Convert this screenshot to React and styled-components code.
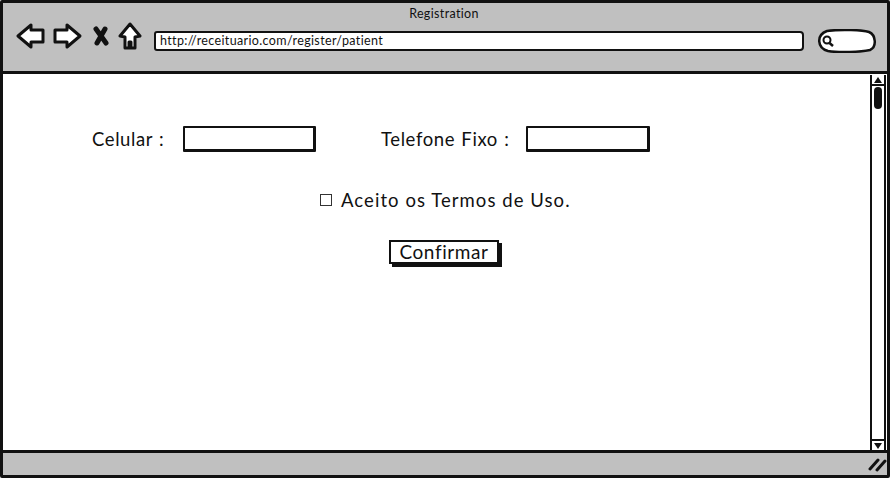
import styled, { createGlobalStyle } from "styled-components";

const Global = createGlobalStyle`
  html, body {
    margin: 0;
    padding: 0;
    background: #fff;
  }
  * {
    box-sizing: border-box;
  }
`;

const Page = styled.div`
  width: 890px;
  height: 480px;
  overflow: hidden;
  font-family: "Lato", "Liberation Sans", sans-serif;
  color: #111;
`;

const Browser = styled.div`
  width: 890px;
  height: 478px;
  display: flex;
  flex-direction: column;
  border: 3px solid #111;
  border-radius: 2px;
  background: #fff;
`;

const Header = styled.header`
  height: 71px;
  flex: none;
  background: #c0c0c0;
  border-bottom: 3px solid #111;
  padding: 3px 10px 0 13px;
`;

const Title = styled.div`
  height: 16px;
  line-height: 16px;
  text-align: center;
  font-size: 12.5px;
  letter-spacing: 0.35px;
  padding-right: 5px;
  margin-bottom: 2px;
`;

const Toolbar = styled.div`
  display: flex;
  align-items: center;
  height: 33px;
`;

const Address = styled.div`
  width: 650px;
  height: 20px;
  margin-left: 12px;
  padding-left: 4px;
  line-height: 16px;
  font-size: 12.5px;
  letter-spacing: 0.36px;
  background: #fff;
  border: 2px solid #111;
  border-radius: 3px 4px 4px 3px;
`;

const Search = styled.svg`
  margin-left: 13px;
  flex: none;
`;

const Main = styled.div`
  flex: 1;
  min-height: 0;
  display: flex;
`;

const Content = styled.main`
  flex: 1;
  display: flex;
  flex-direction: column;
  padding-top: 51px;
`;

const FieldRow = styled.div`
  display: flex;
  align-items: center;
  padding-left: 89px;
  height: 28px;
`;

const Label = styled.label`
  font-size: 18.5px;
  letter-spacing: 0.6px;
  word-spacing: 1px;
  white-space: nowrap;
  width: ${(p) => p.$width}px;
  margin-left: ${(p) => p.$offset || 0}px;
`;

const TextBox = styled.div`
  width: ${(p) => p.$width}px;
  height: 26px;
  background: #fff;
  border: 2px solid #111;
  border-right-width: 3px;
  border-bottom-width: 3px;
  border-radius: 1px;
`;

const TermsRow = styled.div`
  display: flex;
  align-items: center;
  height: 24px;
  margin-top: 35px;
  padding-left: 317px;
  font-size: 18.5px;
  letter-spacing: 1.06px;
  white-space: nowrap;
`;

const CheckMark = styled.span`
  width: 12px;
  height: 12px;
  flex: none;
  margin-right: 9px;
  border: 1px solid #333;
`;

const ButtonRow = styled.div`
  display: flex;
  padding-left: 386px;
  margin-top: 28px;
`;

const Confirm = styled.button`
  width: 110px;
  height: 24px;
  padding: 0;
  font: inherit;
  font-size: 19px;
  line-height: 20px;
  letter-spacing: 0.6px;
  color: #111;
  background: #fff;
  border: 2px solid #111;
  box-shadow: 3px 3px 0 #111;
`;

const Scrollbar = styled.aside`
  width: 16px;
  flex: none;
  margin: 1px 1px 0 0;
  display: flex;
  flex-direction: column;
  align-items: center;
  background: #fff;
  border-left: 2px solid #111;
  border-right: 2px solid #111;
`;

const ScrollArrow = styled.div`
  width: 100%;
  height: 11px;
  flex: none;
  display: flex;
  align-items: center;
  justify-content: center;
  border-bottom: ${(p) => (p.$down ? "none" : "2px solid #111")};
  border-top: ${(p) => (p.$down ? "2px solid #111" : "none")};
  margin-top: ${(p) => (p.$down ? "auto" : "0")};
`;

const Triangle = styled.span`
  width: 0;
  height: 0;
  border-left: 4px solid transparent;
  border-right: 4px solid transparent;
  border-bottom: ${(p) => (p.$down ? "0" : "6px solid #111")};
  border-top: ${(p) => (p.$down ? "6px solid #111" : "0")};
`;

const Thumb = styled.div`
  width: 8px;
  height: 22px;
  margin-top: 1px;
  background: #111;
  border-radius: 4px;
`;

const Footer = styled.footer`
  height: 25px;
  flex: none;
  display: flex;
  align-items: center;
  justify-content: flex-end;
  background: #c0c0c0;
  border-top: 3px solid #111;
`;

const NavIcon = styled.svg`
  flex: none;
  margin-right: ${(p) => p.$gap || 0}px;
  margin-bottom: 10px;
  fill: #fff;
  stroke: #111;
  stroke-width: 3;
  stroke-linejoin: round;
  stroke-linecap: round;
`;

const Back = () => (
  <NavIcon width="30" height="28" viewBox="0 0 30 28" $gap={7}>
    <path d="M2 14 L15 3 L15 8 L27 8 L27 20 L15 20 L15 25 Z" />
  </NavIcon>
);

const Forward = () => (
  <NavIcon width="30" height="28" viewBox="0 0 30 28" $gap={9}>
    <path d="M27 14 L14 3 L14 8 L2 8 L2 20 L14 20 L14 25 Z" />
  </NavIcon>
);

const Stop = () => (
  <NavIcon width="18" height="22" viewBox="0 0 18 22" $gap={8}>
    <path d="M4 4 L14 18 M13 4 L5 18" fill="none" strokeWidth="5" />
  </NavIcon>
);

const Home = () => (
  <NavIcon width="24" height="28" viewBox="0 0 24 28" strokeWidth="2.5">
    <path d="M12 2 L22 14 L17 15 L17 26 L13 26 L13 20 L11 20 L11 26 L7 26 L7 15 L2 14 Z" />
  </NavIcon>
);

export default function App() {
  return (
    <Page>
      <Global />
      <Browser>
        <Header>
          <Title>Registration</Title>
          <Toolbar>
            <Back />
            <Forward />
            <Stop />
            <Home />
            <Address>http://receituario.com/register/patient</Address>
            <Search width="60" height="24" viewBox="0 0 60 24">
              <path
                d="M10 2 C24 0 46 1 52 3 C59 6 60 18 53 21 C44 23 22 24 11 22 C0 19 -1 6 10 2 Z"
                fill="#fff"
                stroke="#111"
                strokeWidth="2.5"
              />
              <circle cx="10" cy="11" r="3.5" fill="none" stroke="#111" strokeWidth="2" />
              <path d="M12.5 14 L16 17" stroke="#111" strokeWidth="2.5" />
            </Search>
          </Toolbar>
        </Header>
        <Main>
          <Content>
            <FieldRow>
              <Label $width={91}>Celular :</Label>
              <TextBox $width={133} />
              <Label $width={145} $offset={65}>
                Telefone Fixo :
              </Label>
              <TextBox $width={124} />
            </FieldRow>
            <TermsRow>
              <CheckMark />
              Aceito os Termos de Uso.
            </TermsRow>
            <ButtonRow>
              <Confirm>Confirmar</Confirm>
            </ButtonRow>
          </Content>
          <Scrollbar>
            <ScrollArrow>
              <Triangle />
            </ScrollArrow>
            <Thumb />
            <ScrollArrow $down>
              <Triangle $down />
            </ScrollArrow>
          </Scrollbar>
        </Main>
        <Footer>
          <svg width="20" height="16" viewBox="0 0 20 16">
            <path d="M3 13 L11 4 M10 14 L18 5" stroke="#111" strokeWidth="3" strokeLinecap="round" />
          </svg>
        </Footer>
      </Browser>
    </Page>
  );
}
